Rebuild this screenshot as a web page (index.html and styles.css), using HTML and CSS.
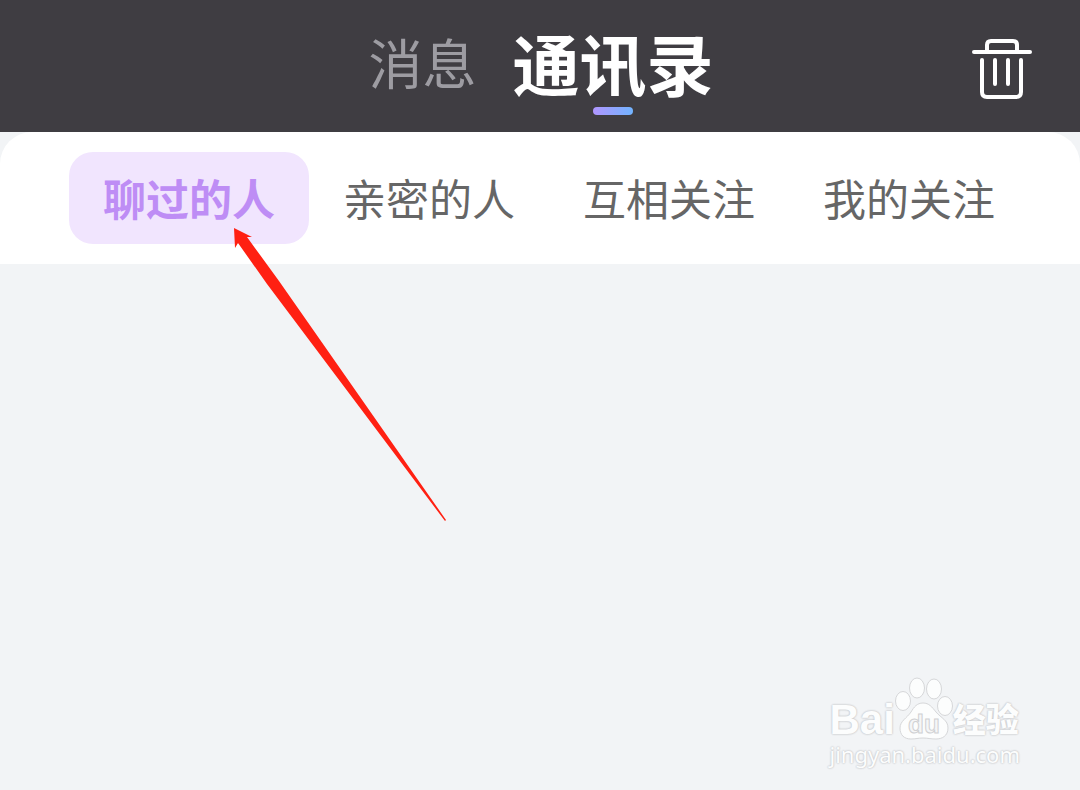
FILE: index.html
```
<!DOCTYPE html>
<html lang="zh-CN">
<head>
    <meta charset="UTF-8">
    <meta name="viewport" content="width=device-width, initial-scale=1.0">
    <title>通讯录</title>
    <link rel="stylesheet" href="styles.css">
</head>

<body>
    <header class="topbar">
        <nav class="topbar-nav">
            <a href="#messages" class="nav-link">消息</a>
            <a href="#contacts" class="nav-link active" aria-current="page">通讯录</a>
        </nav>
        <button type="button" class="delete-btn" aria-label="清空">
            <svg width="60" height="62" viewBox="0 0 60 62" fill="none" stroke="#fff" stroke-width="4" stroke-linecap="round" stroke-linejoin="round">
                <path d="M2 14H58"/>
                <path d="M15 13V7Q15 3 19 3H41Q45 3 45 7V13"/>
                <path d="M10 22V54Q10 59 15 59H44Q49 59 49 54V22"/>
                <path d="M23 22V46M36 22V46"/>
            </svg>
        </button>
    </header>

    <main class="content">
        <div class="tabs" role="tablist">
            <button type="button" class="tab selected" role="tab" aria-selected="true">聊过的人</button>
            <button type="button" class="tab" role="tab" aria-selected="false">亲密的人</button>
            <button type="button" class="tab" role="tab" aria-selected="false">互相关注</button>
            <button type="button" class="tab" role="tab" aria-selected="false">我的关注</button>
        </div>
    </main>

    <svg class="arrow" width="214" height="296" viewBox="0 0 214 296" aria-hidden="true">
        <path d="M1 1L19 10L14 10L46 54L213 293L212 294L34 57L5 16L2 21Z" fill="#ff2012"/>
    </svg>

    <div class="watermark">
        <div class="watermark-logo">
            <span class="brand">Bai</span>
            <svg class="paw" width="60" height="64" viewBox="0 0 60 64">
                <g class="paw-shape">
                    <ellipse cx="9" cy="25" rx="7.5" ry="9.5"/>
                    <ellipse cx="23" cy="12" rx="7.5" ry="10"/>
                    <ellipse cx="40" cy="13" rx="7.5" ry="10"/>
                    <ellipse cx="51" cy="30" rx="7.5" ry="9.5"/>
                    <path d="M29 27C35 27 38 31 42 36C47 42 54 44 54 52C54 60 48 63 42 63C36 63 34 62 29 62C24 62 22 63 17 63C10 63 6 59 6 52C6 45 13 42 17 36C20 31 23 27 29 27Z"/>
                </g>
                <text class="du" x="30" y="57" text-anchor="middle">du</text>
            </svg>
            <span class="product">经验</span>
        </div>
        <div class="watermark-url">jingyan.baidu.com</div>
    </div>
</body>
</html>
```
FILE: styles.css
```
* {
    box-sizing: border-box;
}

body {
    margin: 0;
    min-height: 100vh;
    background-color: #f2f4f6;
    font-family: "Noto Sans CJK SC", sans-serif;
}

button {
    border: none;
    padding: 0;
    background: none;
    font-family: inherit;
    cursor: pointer;
}

.topbar {
    display: grid;
    grid-template-columns: 1fr auto 1fr;
    align-items: start;
    height: 132px;
    padding: 0 48px 0 50px;
    background-color: #3f3d42;
}

.topbar-nav {
    grid-column: 2;
    display: flex;
    gap: 36px;
}

.nav-link {
    position: relative;
    color: #9d9ca2;
    font-size: 54px;
    line-height: 124px;
    text-decoration: none;
}

.nav-link.active {
    color: #fff;
    font-size: 67px;
    font-weight: bold;
}

.nav-link.active::after {
    content: "";
    position: absolute;
    left: 50%;
    bottom: 9px;
    width: 40px;
    height: 8px;
    margin-left: -20px;
    border-radius: 4px;
    background: linear-gradient(to right, #b096ff, #72b4ff);
}

.delete-btn {
    justify-self: end;
    margin-top: 38px;
}

.delete-btn svg {
    display: block;
}

.tabs {
    display: flex;
    padding: 20px 51px 20px 69px;
    border-radius: 32px 32px 0 0;
    background-color: #fff;
}

.tab {
    flex: 1;
    height: 92px;
    padding-bottom: 2px;
    border-radius: 24px;
    color: #666;
    font-size: 43px;
    line-height: 90px;
    white-space: nowrap;
}

.tab.selected {
    background-color: #f1e5fe;
    color: #be8df5;
    font-weight: bold;
}

.arrow {
    position: absolute;
    left: 233px;
    top: 227px;
}

.watermark {
    position: absolute;
    right: 60px;
    bottom: 22px;
    color: #fcfdfd;
    text-shadow: 0 0 2px #c4c5c8, 0 0 2px #c4c5c8;
}

.watermark-logo {
    display: flex;
    align-items: flex-end;
}

.brand {
    font-family: "Liberation Sans", sans-serif;
    font-size: 42px;
    font-weight: bold;
    line-height: 40px;
}

.paw {
    margin: 0 -1px;
}

.paw-shape {
    fill: #fcfdfd;
    stroke: #d6d7d9;
    stroke-width: 1;
}

.du {
    fill: #f5f6f7;
    stroke: #d0d1d3;
    stroke-width: 1;
    font-family: "Liberation Sans", sans-serif;
    font-size: 26px;
    font-weight: bold;
    text-shadow: none;
}

.product {
    font-size: 33px;
    font-weight: 900;
    line-height: 44px;
}

.watermark-url {
    font-family: "Noto Sans", sans-serif;
    font-size: 22px;
    line-height: 28px;
}
```
